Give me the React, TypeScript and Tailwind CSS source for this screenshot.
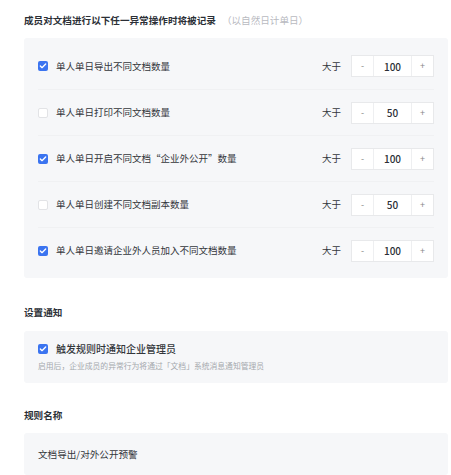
import { Check } from "lucide-react";

const rules = [
  { label: "单人单日导出不同文档数量", checked: true, value: 100 },
  { label: "单人单日打印不同文档数量", checked: false, value: 50 },
  { label: "单人单日开启不同文档“企业外公开”数量", checked: true, value: 100 },
  { label: "单人单日创建不同文档副本数量", checked: false, value: 50 },
  { label: "单人单日邀请企业外人员加入不同文档数量", checked: true, value: 100 },
];

function Box({ checked }: { checked: boolean }) {
  return checked ? (
    <span className="flex h-[10px] w-[10px] shrink-0 items-center justify-center rounded-[2px] bg-[#3b74f0]">
      <Check className="h-[8px] w-[8px] text-white" strokeWidth={4} />
    </span>
  ) : (
    <span className="h-[10px] w-[10px] shrink-0 rounded-[2px] border border-[#e2e3e6] bg-white" />
  );
}

function Stepper({ value }: { value: number }) {
  return (
    <div className="flex h-[22px] w-[83px] border border-[#e8e9eb] bg-white text-[#2b2f36]">
      <span className="flex w-[22px] items-center justify-center border-r border-[#eeeff1] text-[9px] text-[#888]">
        -
      </span>
      <span className="flex flex-1 items-center justify-center text-[10px] font-medium">{value}</span>
      <span className="flex w-[22px] items-center justify-center border-l border-[#eeeff1] text-[9px] text-[#888]">
        +
      </span>
    </div>
  );
}

export default function App() {
  return (
    <div className="h-[475px] w-[451px] overflow-hidden bg-white pl-[24px] pr-[3px] pt-[13px] font-['Noto_Sans_CJK_SC',sans-serif] text-[#2b2f36]">
      <div className="flex h-[15px] items-center text-[9.6px] leading-none">
        <span className="font-bold">成员对文档进行以下任一异常操作时将被记录</span>
        <span className="ml-[6px] text-[#b8babf]">（以自然日计单日）</span>
      </div>

      <div className="mt-[10px] rounded-[3px] bg-[#f6f7f9] px-[14px] py-[5px]">
        {rules.map((r, i) => (
          <div
            key={i}
            className={`flex h-[46px] items-center ${i > 0 ? "border-t border-[#f0f1f3]" : ""}`}
          >
            <Box checked={r.checked} />
            <span className="ml-[8px] flex-1 text-[9.5px] text-[#33363b]">{r.label}</span>
            <span className="mr-[10px] text-[9.5px] text-[#33363b]">大于</span>
            <Stepper value={r.value} />
          </div>
        ))}
      </div>

      <div className="mt-[30px] text-[9.6px] font-bold leading-none">设置通知</div>
      <div className="mt-[13px] flex h-[52px] flex-col justify-center rounded-[3px] bg-[#f6f7f9] px-[14px]">
        <div className="flex items-center">
          <Box checked />
          <span className="ml-[8px] text-[10px] font-medium text-[#33363b]">触发规则时通知企业管理员</span>
        </div>
        <div className="mt-[4px] text-[7.8px] text-[#a5a8ad]">
          启用后，企业成员的异常行为将通过「文档」系统消息通知管理员
        </div>
      </div>

      <div className="mt-[28px] text-[9.6px] font-bold leading-none">规则名称</div>
      <div className="mt-[13px] flex h-[42px] items-center rounded-[3px] bg-[#f6f7f9] px-[14px] text-[9.6px] text-[#33363b]">
        文档导出/对外公开预警
      </div>
    </div>
  );
}
